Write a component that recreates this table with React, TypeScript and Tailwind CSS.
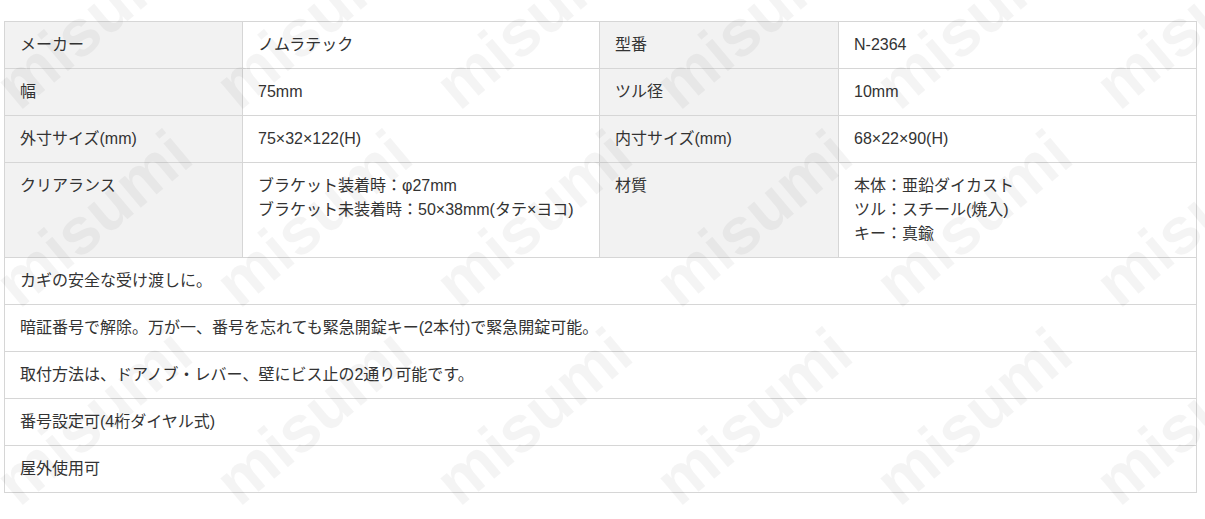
import React from 'react'

const font = { fontFamily: '"Liberation Sans", "Noto Sans CJK JP", sans-serif' }

const specs: [string, React.ReactNode, string, React.ReactNode][] = [
    ['メーカー', 'ノムラテック', '型番', 'N-2364'],
    ['幅', '75mm', 'ツル径', '10mm'],
    ['外寸サイズ(mm)', '75×32×122(H)', '内寸サイズ(mm)', '68×22×90(H)'],
    [
        'クリアランス',
        <>ブラケット装着時：φ27mm<br />ブラケット未装着時：50×38mm(タテ×ヨコ)</>,
        '材質',
        <>本体：亜鉛ダイカスト<br />ツル：スチール(焼入)<br />キー：真鍮</>,
    ],
]

const notes = [
    'カギの安全な受け渡しに。',
    '暗証番号で解除。万が一、番号を忘れても緊急開錠キー(2本付)で緊急開錠可能。',
    '取付方法は、ドアノブ・レバー、壁にビス止の2通り可能です。',
    '番号設定可(4桁ダイヤル式)',
    '屋外使用可',
]

// watermark centres
const marks: [number, number][] = []
for (let r = 0; r < 3; r++) {
    for (let c = 0; c < 6; c++) {
        marks.push([93 + c * 220, 20 + r * 198])
    }
}

export default function App() {
    const label = 'border border-[#d6d6d6] bg-[#f2f2f2] px-[15px] py-[11px] align-top'
    const value = 'border border-[#d6d6d6] bg-white px-[15px] py-[11px] align-top'

    return (
        <div className="relative h-[519px] w-[1205px] overflow-hidden bg-white" style={font}>
            <div className="pl-[4px] pt-[21px]">
                <table className="w-[1192px] table-fixed border-collapse text-[16px] leading-[24px] text-[#333]">
                    <colgroup>
                        <col className="w-[238px]" />
                        <col className="w-[357px]" />
                        <col className="w-[239px]" />
                        <col className="w-[358px]" />
                    </colgroup>
                    <tbody>
                        {specs.map(([a, b, c, d], i) => (
                            <tr key={i}>
                                <td className={label}>{a}</td>
                                <td className={value}>{b}</td>
                                <td className={label}>{c}</td>
                                <td className={value}>{d}</td>
                            </tr>
                        ))}
                        {notes.map((n) => (
                            <tr key={n}>
                                <td colSpan={4} className={value}>{n}</td>
                            </tr>
                        ))}
                    </tbody>
                </table>
            </div>

            {/* watermark */}
            <div className="pointer-events-none absolute inset-0" aria-hidden="true">
                {marks.map(([x, y], i) => (
                    <span
                        key={i}
                        className="absolute -translate-x-1/2 -translate-y-1/2 -rotate-[40deg] select-none whitespace-nowrap text-[66px] font-bold leading-none text-black/[0.045]"
                        style={{ left: x, top: y, fontFamily: '"Liberation Sans", sans-serif' }}
                    >
                        misumi
                    </span>
                ))}
            </div>
        </div>
    )
}
